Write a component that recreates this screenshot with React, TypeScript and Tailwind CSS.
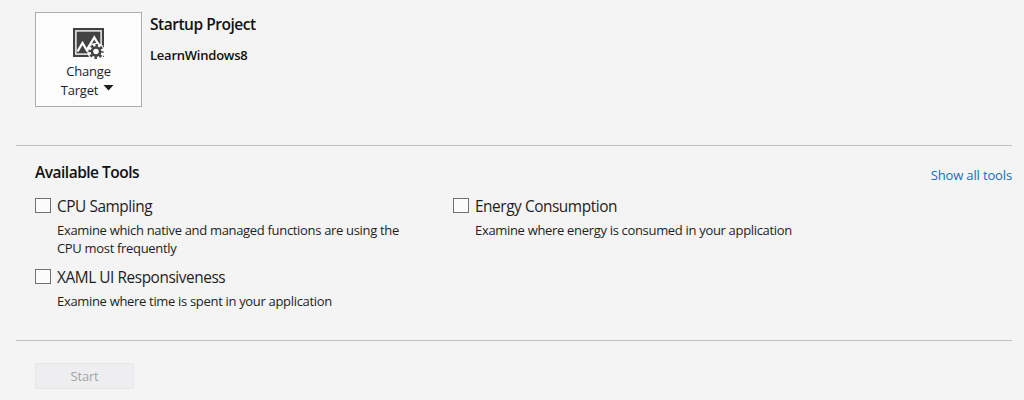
type ToolProps = { name: string; description: string[] };

function Tool({ name, description }: ToolProps) {
  return (
    <div className="flex">
      <div role="checkbox" aria-checked="false" className="mt-px h-[15px] w-4 shrink-0 border border-[#717171] bg-[#fbfbfb]" />
      <div className="ml-1.5 whitespace-nowrap">
        <h3 className="-mt-0.5 h-[26px] text-[15.4px] leading-6 tracking-[-0.44px]">{name}</h3>
        {description.map((line) => (
          <p key={line} className="h-[18px] text-[13px] leading-[18px] tracking-[-0.32px]">{line}</p>
        ))}
      </div>
    </div>
  );
}

function TargetIcon() {
  return (
    <svg width="33" height="34" viewBox="0 0 33 34" fill="none">
      <rect x="1" y="1" width="31" height="29" fill="#424242" />
      <rect x="3.9" y="3.9" width="25.2" height="23.2" stroke="#fcfcfc" strokeWidth="1.4" />
      <path d="M5.5 24.5 L10.5 16 L15.5 24.5 M15 22.5 L22.3 10.5 L27.5 19" stroke="#fcfcfc" strokeWidth="2.3" />
      <circle cx="24" cy="24.5" r="8.8" fill="#fcfcfc" />
      <circle cx="24" cy="24.5" r="4.1" stroke="#424242" strokeWidth="2.6" />
      <circle cx="24" cy="24.5" r="6.3" stroke="#424242" strokeWidth="2.6" strokeDasharray="2.5 2.448" strokeDashoffset="1.25" />
    </svg>
  );
}

export default function App() {
  return (
    <main className="flex h-[400px] w-[1024px] flex-col overflow-hidden bg-[#f4f4f4] pr-3 pl-4 font-['Open_Sans','Noto_Sans',sans-serif] text-[#1e1e1e]">
      <header className="flex h-[145px] items-start pt-3 pl-[19px]">
        <button className="flex h-[95px] w-[107px] flex-col items-center border border-[#acacac] bg-[#fcfcfc] pt-[14px] text-[13px] tracking-[-0.2px]">
          <TargetIcon />
          <span className="mt-px leading-[19px]">Change</span>
          <span className="mr-0.5 flex leading-[19px]">
            Target
            <svg className="mt-[4px] ml-[5px]" width="11" height="6" viewBox="0 0 11 6"><path d="M0.5 0h10L5.5 5.5z" fill="#1e1e1e" /></svg>
          </span>
        </button>
        <div className="ml-2 whitespace-nowrap text-[#111]">
          <h1 className="h-[27px] text-[15.5px] leading-[25px] font-semibold tracking-[-0.48px]">Startup Project</h1>
          <p className="mt-[7px] text-[13px] leading-[18px] font-semibold tracking-[-0.23px]">LearnWindows8</p>
        </div>
      </header>
      <section className="h-[195px] border-t border-[#c2c2c2] pl-[19px]">
        <div className="flex h-[51px] justify-between">
          <h2 className="mt-[14px] text-[15.5px] leading-6 font-semibold tracking-[-0.5px] text-[#111]">Available Tools</h2>
          <a className="mt-5 text-[13px] leading-[18px] tracking-[-0.14px] text-[#0e70c0]">Show all tools</a>
        </div>
        <div className="flex">
          <div className="flex w-[418px] flex-col gap-[11px]">
            <Tool name="CPU Sampling" description={["Examine which native and managed functions are using the", "CPU most frequently"]} />
            <Tool name="XAML UI Responsiveness" description={["Examine where time is spent in your application"]} />
          </div>
          <Tool name="Energy Consumption" description={["Examine where energy is consumed in your application"]} />
        </div>
      </section>
      <footer className="border-t border-[#c2c2c2] pt-[22px] pl-[19px]">
        <button disabled className="block h-[26px] w-[99px] border border-[#e7e7eb] bg-[#eeeef0] text-[13px] leading-6 tracking-[-0.2px] text-[#a2a4a5]">Start</button>
      </footer>
    </main>
  );
}
